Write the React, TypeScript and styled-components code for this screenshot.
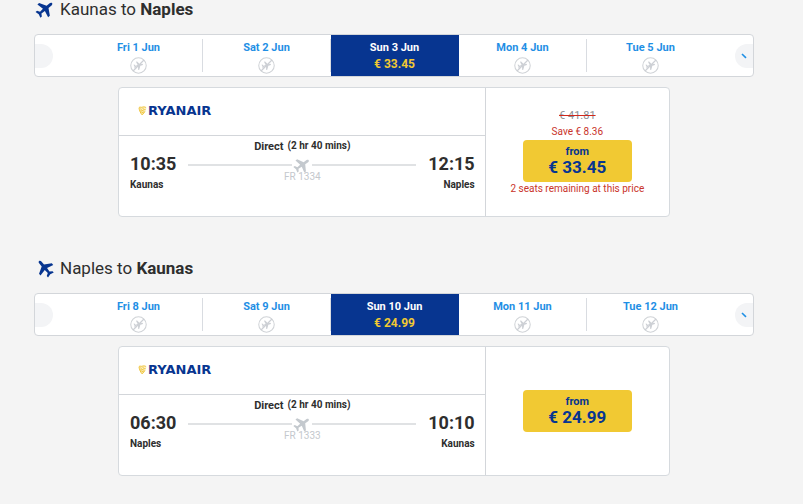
import React from "react";
import styled, { createGlobalStyle } from "styled-components";

const GlobalStyle = createGlobalStyle`
  *, *::before, *::after { box-sizing: border-box; }
  body {
    margin: 0;
    background: #f4f4f4;
    color: #2e2e2e;
    font-family: Roboto, "Liberation Sans", sans-serif;
  }
  h1, h2, p { margin: 0; }
  button { font-family: inherit; cursor: pointer; }
`;

const Page = styled.main`
  padding: 0 49px 28px 34px;
`;

const Leg = styled.section`
  & + & { margin-top: 42px; }
`;

const Heading = styled.h2`
  display: flex;
  align-items: center;
  gap: 5px;
  height: 18px;
  margin-bottom: 16px;
  padding-left: 1px;
  font-size: 17px;
  line-height: 18px;
  font-weight: 400;
`;

const HeadingIcon = styled.svg<{ $mirrored?: boolean }>`
  flex: none;
  width: 20px;
  height: 20px;
  fill: #073590;
  transform: ${(p) => (p.$mirrored ? "scaleX(-1)" : "none")};
`;

const DateBar = styled.div`
  display: flex;
  height: 43px;
  margin-bottom: 10px;
  overflow: hidden;
  background: #fff;
  border: 1px solid #d3d6da;
  border-radius: 4px;
`;

const ArrowSlot = styled.div<{ $end?: boolean }>`
  flex: none;
  display: flex;
  align-items: center;
  width: ${(p) => (p.$end ? 38 : 40)}px;
  justify-content: ${(p) => (p.$end ? "flex-end" : "flex-start")};
`;

const Arrow = styled.button<{ $end?: boolean }>`
  display: grid;
  place-items: center;
  width: 18px;
  height: 24px;
  padding: 0;
  border: 0;
  border-radius: ${(p) => (p.$end ? "12px 0 0 12px" : "0 12px 12px 0")};
  background: #f3f4f6;
`;

const Dates = styled.div`
  flex: 1;
  display: grid;
  grid-template-columns: repeat(5, 1fr);
`;

const DateCell = styled.button<{ $active?: boolean }>`
  display: flex;
  flex-direction: column;
  align-items: center;
  gap: 2px;
  padding: 6px 1px 0 0;
  border: 0;
  background: ${(p) =>
    p.$active
      ? "#073590"
      : "linear-gradient(#d9dce1, #d9dce1) right center / 1px 33px no-repeat"};
  color: ${(p) => (p.$active ? "#fff" : "#1f8fe5")};
  font-size: 11px;
  line-height: 14px;
  font-weight: 700;

  &:last-child { background: none; }
`;

const DatePrice = styled.span`
  color: #f1c933;
  font-size: 12px;
  line-height: 14px;
`;

const Card = styled.article`
  display: grid;
  grid-template-columns: 2fr 1fr;
  min-height: 130px;
  margin: 0 84px;
  background: #fff;
  border: 1px solid #d6dade;
  border-radius: 4px;
`;

const Details = styled.div`
  border-right: 1px solid #d3d6da;
`;

const Carrier = styled.div`
  display: flex;
  align-items: center;
  gap: 1px;
  height: 48px;
  padding: 0 0 2px 19px;
  border-bottom: 1px solid #d3d6da;
  color: #073590;
  font: 700 13px/16px "DejaVu Sans", sans-serif;
`;

const Journey = styled.div`
  display: grid;
  grid-template-columns: auto 1fr auto;
  column-gap: 12px;
  padding: 4px 10px 0 11px;
`;

const Stop = styled.div<{ $end?: boolean }>`
  padding-top: 14px;
  text-align: ${(p) => (p.$end ? "right" : "left")};
`;

const Time = styled.p`
  font-size: 18px;
  line-height: 20px;
  font-weight: 700;
`;

const City = styled.p`
  margin-top: 5px;
  font-size: 10px;
  line-height: 12px;
  font-weight: 700;
`;

const Middle = styled.div`
  text-align: center;
`;

const Duration = styled.p`
  display: flex;
  justify-content: center;
  gap: 4px;
  font-size: 10px;
  line-height: 12px;
  font-weight: 700;
`;

const Direct = styled.span`
  font-size: 11px;
  line-height: 14px;
`;

const Route = styled.div`
  display: flex;
  align-items: center;
  gap: 1px;
  height: 16px;
  margin-top: 3px;

  &::before, &::after {
    content: "";
    flex: 1;
    height: 2px;
    background: #e0e2e4;
  }
`;

const FlightNumber = styled.p`
  color: #c4c8cd;
  font-size: 10px;
  line-height: 8px;
`;

const Fare = styled.div`
  display: flex;
  flex-direction: column;
  align-items: center;
  justify-content: center;
  font-size: 10px;
`;

const OldPrice = styled.s`
  color: #8a8d91;
  font-size: 11px;
  line-height: 16px;
  text-decoration-color: #d0281c;
`;

const Note = styled.p`
  padding: 1px 0;
  color: #c9342b;
  line-height: 12px;
`;

const Saving = styled(Note)`
  line-height: 14px;
`;

const FareButton = styled.button`
  display: flex;
  flex-direction: column;
  align-items: center;
  width: 109px;
  height: 42px;
  padding: 5px 0 0;
  border: 0;
  border-radius: 4px;
  background: #f1c933;
  color: #073590;
  font-size: 11px;
  line-height: 14px;
  font-weight: 700;
`;

const FareAmount = styled.span`
  font-size: 17px;
  line-height: 16px;
`;

const PLANE =
  "M22 15.5v-2.7L13.8 8V3.2C13.8 2 13 1 12 1s-1.8 1-1.8 2.2V8L2 12.8v2.7l8.2-1.8.5 5-3.2 2V23l4.5-1.2 4.5 1.2v-2.3l-3.2-2 .5-5z";

const RoutePlane = () => (
  <svg width="18" height="18" viewBox="0 0 24 24" fill="#c4c9ce" aria-hidden="true">
    <path d={PLANE} transform="rotate(54 12 12)" />
  </svg>
);

const NoFlight = () => (
  <svg width="17" height="17" viewBox="0 0 18 18" role="img" aria-label="No flights">
    <circle cx="9" cy="9" r="8.2" fill="none" stroke="#d0d3d7" strokeWidth="1.1" />
    <path d={PLANE} fill="#cdd0d5" transform="translate(3.6 3.6) scale(.45) rotate(75 12 12)" />
    <path d="M3.2 14.8 14.8 3.2" stroke="#cdd0d5" strokeWidth="1.2" />
  </svg>
);

const Harp = () => (
  <svg width="9" height="10" viewBox="0 0 8 10" aria-hidden="true">
    <path d="M.3 1.4C1.2.2 2.5 1.4 3.8.8S6.8.4 7.8 1.6C7.6 5 6.3 7.8 3.5 9.2 1.8 7.2.3 4.6.3 1.4z" fill="#fbf0c4" />
    <path d="M.5 1.8C.8 4.5 2 7 3.5 8.8M.5 1.6c1-.9 2 0 3.3-.4S6.6.8 7.6 1.7M2.2 2.4c.4 1.6 1.4 2.6 3.8 2.8M4.2 2c.3 1.2 1.2 1.6 2.8 1.6M1.6 5h2M6.4 5.6 3.8 8.8M3 6.6h2" fill="none" stroke="#eec02e" strokeWidth=".9" />
  </svg>
);

const ArrowMark = () => (
  <svg width="6" height="6" viewBox="0 0 6 6" aria-hidden="true">
    <path d="M1 1 5 4.8" stroke="#1f8fe5" strokeWidth="1.6" />
  </svg>
);

type Trip = {
  from: string;
  to: string;
  days: string[];
  price: string;
  depart: string;
  arrive: string;
  flight: string;
  oldPrice?: string;
  saving?: string;
  remaining?: string;
  inbound?: boolean;
};

const trips: Trip[] = [
  {
    from: "Kaunas",
    to: "Naples",
    days: ["Fri 1 Jun", "Sat 2 Jun", "Sun 3 Jun", "Mon 4 Jun", "Tue 5 Jun"],
    price: "€ 33.45",
    depart: "10:35",
    arrive: "12:15",
    flight: "FR 1334",
    oldPrice: "€ 41.81",
    saving: "Save € 8.36",
    remaining: "2 seats remaining at this price",
  },
  {
    from: "Naples",
    to: "Kaunas",
    days: ["Fri 8 Jun", "Sat 9 Jun", "Sun 10 Jun", "Mon 11 Jun", "Tue 12 Jun"],
    price: "€ 24.99",
    depart: "06:30",
    arrive: "10:10",
    flight: "FR 1333",
    inbound: true,
  },
];

const TripLeg = ({ trip }: { trip: Trip }) => (
  <Leg>
    <Heading>
      <HeadingIcon $mirrored={trip.inbound} viewBox="0 0 24 24" aria-hidden="true">
        <path d={PLANE} transform={`rotate(${trip.inbound ? 40 : 50} 12 12)`} />
      </HeadingIcon>
      <span>
        {trip.from} to <b>{trip.to}</b>
      </span>
    </Heading>
    <DateBar>
      <ArrowSlot>
        <Arrow aria-label="Earlier dates" />
      </ArrowSlot>
      <Dates>
        {trip.days.map((day, i) => (
          <DateCell key={day} $active={i === 2} aria-pressed={i === 2}>
            <span>{day}</span>
            {i === 2 ? <DatePrice>{trip.price}</DatePrice> : <NoFlight />}
          </DateCell>
        ))}
      </Dates>
      <ArrowSlot $end>
        <Arrow $end aria-label="Later dates">
          <ArrowMark />
        </Arrow>
      </ArrowSlot>
    </DateBar>
    <Card>
      <Details>
        <Carrier>
          <Harp />
          <span>RYANAIR</span>
        </Carrier>
        <Journey>
          <Stop>
            <Time>{trip.depart}</Time>
            <City>{trip.from}</City>
          </Stop>
          <Middle>
            <Duration>
              <Direct>Direct</Direct>
              <span>(2 hr 40 mins)</span>
            </Duration>
            <Route>
              <RoutePlane />
            </Route>
            <FlightNumber>{trip.flight}</FlightNumber>
          </Middle>
          <Stop $end>
            <Time>{trip.arrive}</Time>
            <City>{trip.to}</City>
          </Stop>
        </Journey>
      </Details>
      <Fare>
        {trip.oldPrice && <OldPrice>{trip.oldPrice}</OldPrice>}
        {trip.saving && <Saving>{trip.saving}</Saving>}
        <FareButton>
          <span>from</span>
          <FareAmount>{trip.price}</FareAmount>
        </FareButton>
        {trip.remaining && <Note>{trip.remaining}</Note>}
      </Fare>
    </Card>
  </Leg>
);

export default function App() {
  return (
    <>
      <GlobalStyle />
      <Page>
        {trips.map((trip) => (
          <TripLeg key={trip.flight} trip={trip} />
        ))}
      </Page>
    </>
  );
}
